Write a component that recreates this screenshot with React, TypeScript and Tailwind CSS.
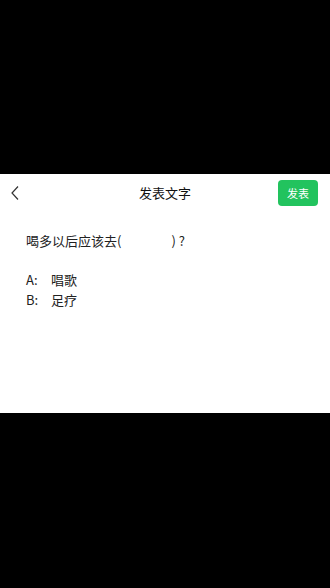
export default function App() {
  return (
    <div
      className="flex h-[588px] w-[330px] flex-col bg-black"
      style={{ fontFamily: '"Noto Sans CJK SC", "Liberation Sans", sans-serif' }}
    >
      <div className="h-[174px]" />
      <div className="flex h-[239px] flex-col bg-white">
        <div className="relative flex h-[38px] items-center justify-center">
          <svg
            className="absolute left-[10px] top-[11px]"
            width="10"
            height="16"
            viewBox="0 0 10 16"
            fill="none"
            stroke="#333"
            strokeWidth="1.2"
          >
            <path d="M8 1.5 L2 8 L8 14.5" />
          </svg>
          <span className="text-[13px] text-[#111]">发表文字</span>
          <button className="absolute right-[12px] top-[6px] h-[26px] w-[40px] rounded-[4px] bg-[#22c35e] text-[11px] text-white">
            发表
          </button>
        </div>
        <div className="px-[26px] pt-[19px] text-[13px] text-[#222]">
          <div className="flex items-center">
            <span>喝多以后应该去(</span>
            <span className="w-[50px]" />
            <span>) ?</span>
          </div>
          <div className="mt-[19px] flex flex-col gap-[1px]">
            <div className="flex">
              <span className="w-[25px]">A:</span>
              <span>唱歌</span>
            </div>
            <div className="flex">
              <span className="w-[25px]">B:</span>
              <span>足疗</span>
            </div>
          </div>
        </div>
      </div>
      <div className="flex-1" />
    </div>
  );
}
